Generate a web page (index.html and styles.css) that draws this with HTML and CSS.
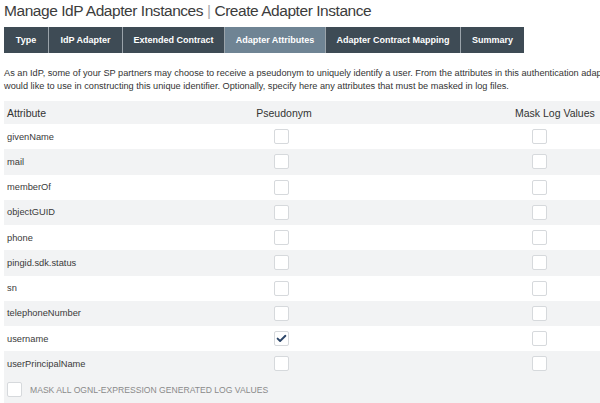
FILE: index.html
```html
<!DOCTYPE html>
<html>
<head>
<meta charset="utf-8">
<link rel="stylesheet" href="styles.css">
</head>
<body>
<div class="page">
  <h1 class="title">Manage IdP Adapter Instances <span class="sep">|</span> Create Adapter Instance</h1>
  <nav class="tabs">
    <div class="tab">Type</div>
    <div class="tab">IdP Adapter</div>
    <div class="tab">Extended Contract</div>
    <div class="tab active">Adapter Attributes</div>
    <div class="tab">Adapter Contract Mapping</div>
    <div class="tab">Summary</div>
  </nav>
  <p class="desc">As an IdP, some of your SP partners may choose to receive a pseudonym to uniquely identify a user. From the attributes in this authentication adapter, select the values that you<br>would like to use in constructing this unique identifier. Optionally, specify here any attributes that must be masked in log files.</p>
  <div class="table">
    <div class="row head">
      <div class="c-attr">Attribute</div>
      <div class="c-ps">Pseudonym</div>
      <div class="c-mask">Mask Log Values</div>
    </div>
    <div class="row"><div class="c-attr">givenName</div><div class="c-ps"><span class="cb"></span></div><div class="c-mask"><span class="cb"></span></div></div>
    <div class="row alt"><div class="c-attr">mail</div><div class="c-ps"><span class="cb"></span></div><div class="c-mask"><span class="cb"></span></div></div>
    <div class="row"><div class="c-attr">memberOf</div><div class="c-ps"><span class="cb"></span></div><div class="c-mask"><span class="cb"></span></div></div>
    <div class="row alt"><div class="c-attr">objectGUID</div><div class="c-ps"><span class="cb"></span></div><div class="c-mask"><span class="cb"></span></div></div>
    <div class="row"><div class="c-attr">phone</div><div class="c-ps"><span class="cb"></span></div><div class="c-mask"><span class="cb"></span></div></div>
    <div class="row alt"><div class="c-attr">pingid.sdk.status</div><div class="c-ps"><span class="cb"></span></div><div class="c-mask"><span class="cb"></span></div></div>
    <div class="row"><div class="c-attr">sn</div><div class="c-ps"><span class="cb"></span></div><div class="c-mask"><span class="cb"></span></div></div>
    <div class="row alt"><div class="c-attr">telephoneNumber</div><div class="c-ps"><span class="cb"></span></div><div class="c-mask"><span class="cb"></span></div></div>
    <div class="row"><div class="c-attr">username</div><div class="c-ps"><span class="cb checked"><svg viewBox="0 0 15 15" width="15" height="15"><path d="M3.6 7.6 L6.1 10 L11.4 4.8" fill="none" stroke="#2c4669" stroke-width="1.9" stroke-linecap="round" stroke-linejoin="round"/></svg></span></div><div class="c-mask"><span class="cb"></span></div></div>
    <div class="row alt"><div class="c-attr">userPrincipalName</div><div class="c-ps"><span class="cb"></span></div><div class="c-mask"><span class="cb"></span></div></div>
    <div class="row alt maskall"><span class="cb"></span><span class="maskall-label">MASK ALL OGNL-EXPRESSION GENERATED LOG VALUES</span></div>
  </div>
</div>
</body>
</html>
```

FILE: styles.css
```css
html, body {
  margin: 0;
  padding: 0;
  background: #fff;
  overflow: hidden;
}
body {
  font-family: "Liberation Sans", Arial, sans-serif;
  color: #333;
  width: 600px;
  height: 403px;
}
.page {
  padding: 0 0 0 4px;
}
.title {
  margin: 0;
  padding-top: 1px;
  font-weight: normal;
  font-size: 15.5px;
  letter-spacing: -0.45px;
  line-height: 20px;
  color: #3c3c3c;
  white-space: nowrap;
}
.title .sep {
  color: #aaa;
  font-weight: 300;
}
.tabs {
  display: flex;
  margin-top: 6px;
  height: 26px;
  width: 520px;
}
.tab {
  display: flex;
  align-items: center;
  justify-content: center;
  background: #3e4b55;
  color: #fff;
  font-size: 9px;
  font-weight: bold;
  border-right: 1px solid #9aa3aa;
  white-space: nowrap;
}
.tab:last-child { border-right: none; }
.tab:nth-child(1) { width: 44px; }
.tab:nth-child(2) { width: 73px; }
.tab:nth-child(3) { width: 101px; }
.tab:nth-child(4) { width: 100px; }
.tab:nth-child(5) { width: 134px; }
.tab:nth-child(6) { width: 63px; }
.tab.active {
  background: #6f8494;
}
.desc {
  margin: 14px 0 0 0;
  font-size: 9.2px;
  line-height: 13px;
  color: #333;
  white-space: nowrap;
}
.table {
  margin-top: 8px;
  width: 596px;
}
.row {
  display: grid;
  grid-template-columns: 196px 168px 1fr;
  align-items: center;
  height: 25.25px;
}
.row.alt { background: #f2f3f4; }
.row.head {
  background: #f2f3f4;
  height: 23px;
  font-size: 10.5px;
  color: #333;
}
.c-attr {
  padding-left: 3px;
  font-size: 9.3px;
  color: #3a3a3a;
}
.head .c-attr { font-size: 10.5px; color: #333; }
.c-ps {
  display: flex;
  justify-content: center;
  padding-right: 5px;
}
.head .c-ps { padding-right: 0; }
.c-mask {
  display: flex;
  padding-left: 164px;
}
.head .c-mask {
  padding-left: 147px;
  white-space: nowrap;
}
.cb {
  display: block;
  width: 15px;
  height: 15px;
  box-sizing: border-box;
  border: 1px solid #d6d9dc;
  border-radius: 2px;
  background: #fff;
  position: relative;
}
.cb svg {
  position: absolute;
  left: -1px;
  top: -1px;
}
.maskall {
  display: flex;
  align-items: center;
  height: 26px;
  padding-left: 3px;
}
.maskall-label {
  margin-left: 8px;
  font-size: 8.6px;
  color: #8a8a8a;
}
```
